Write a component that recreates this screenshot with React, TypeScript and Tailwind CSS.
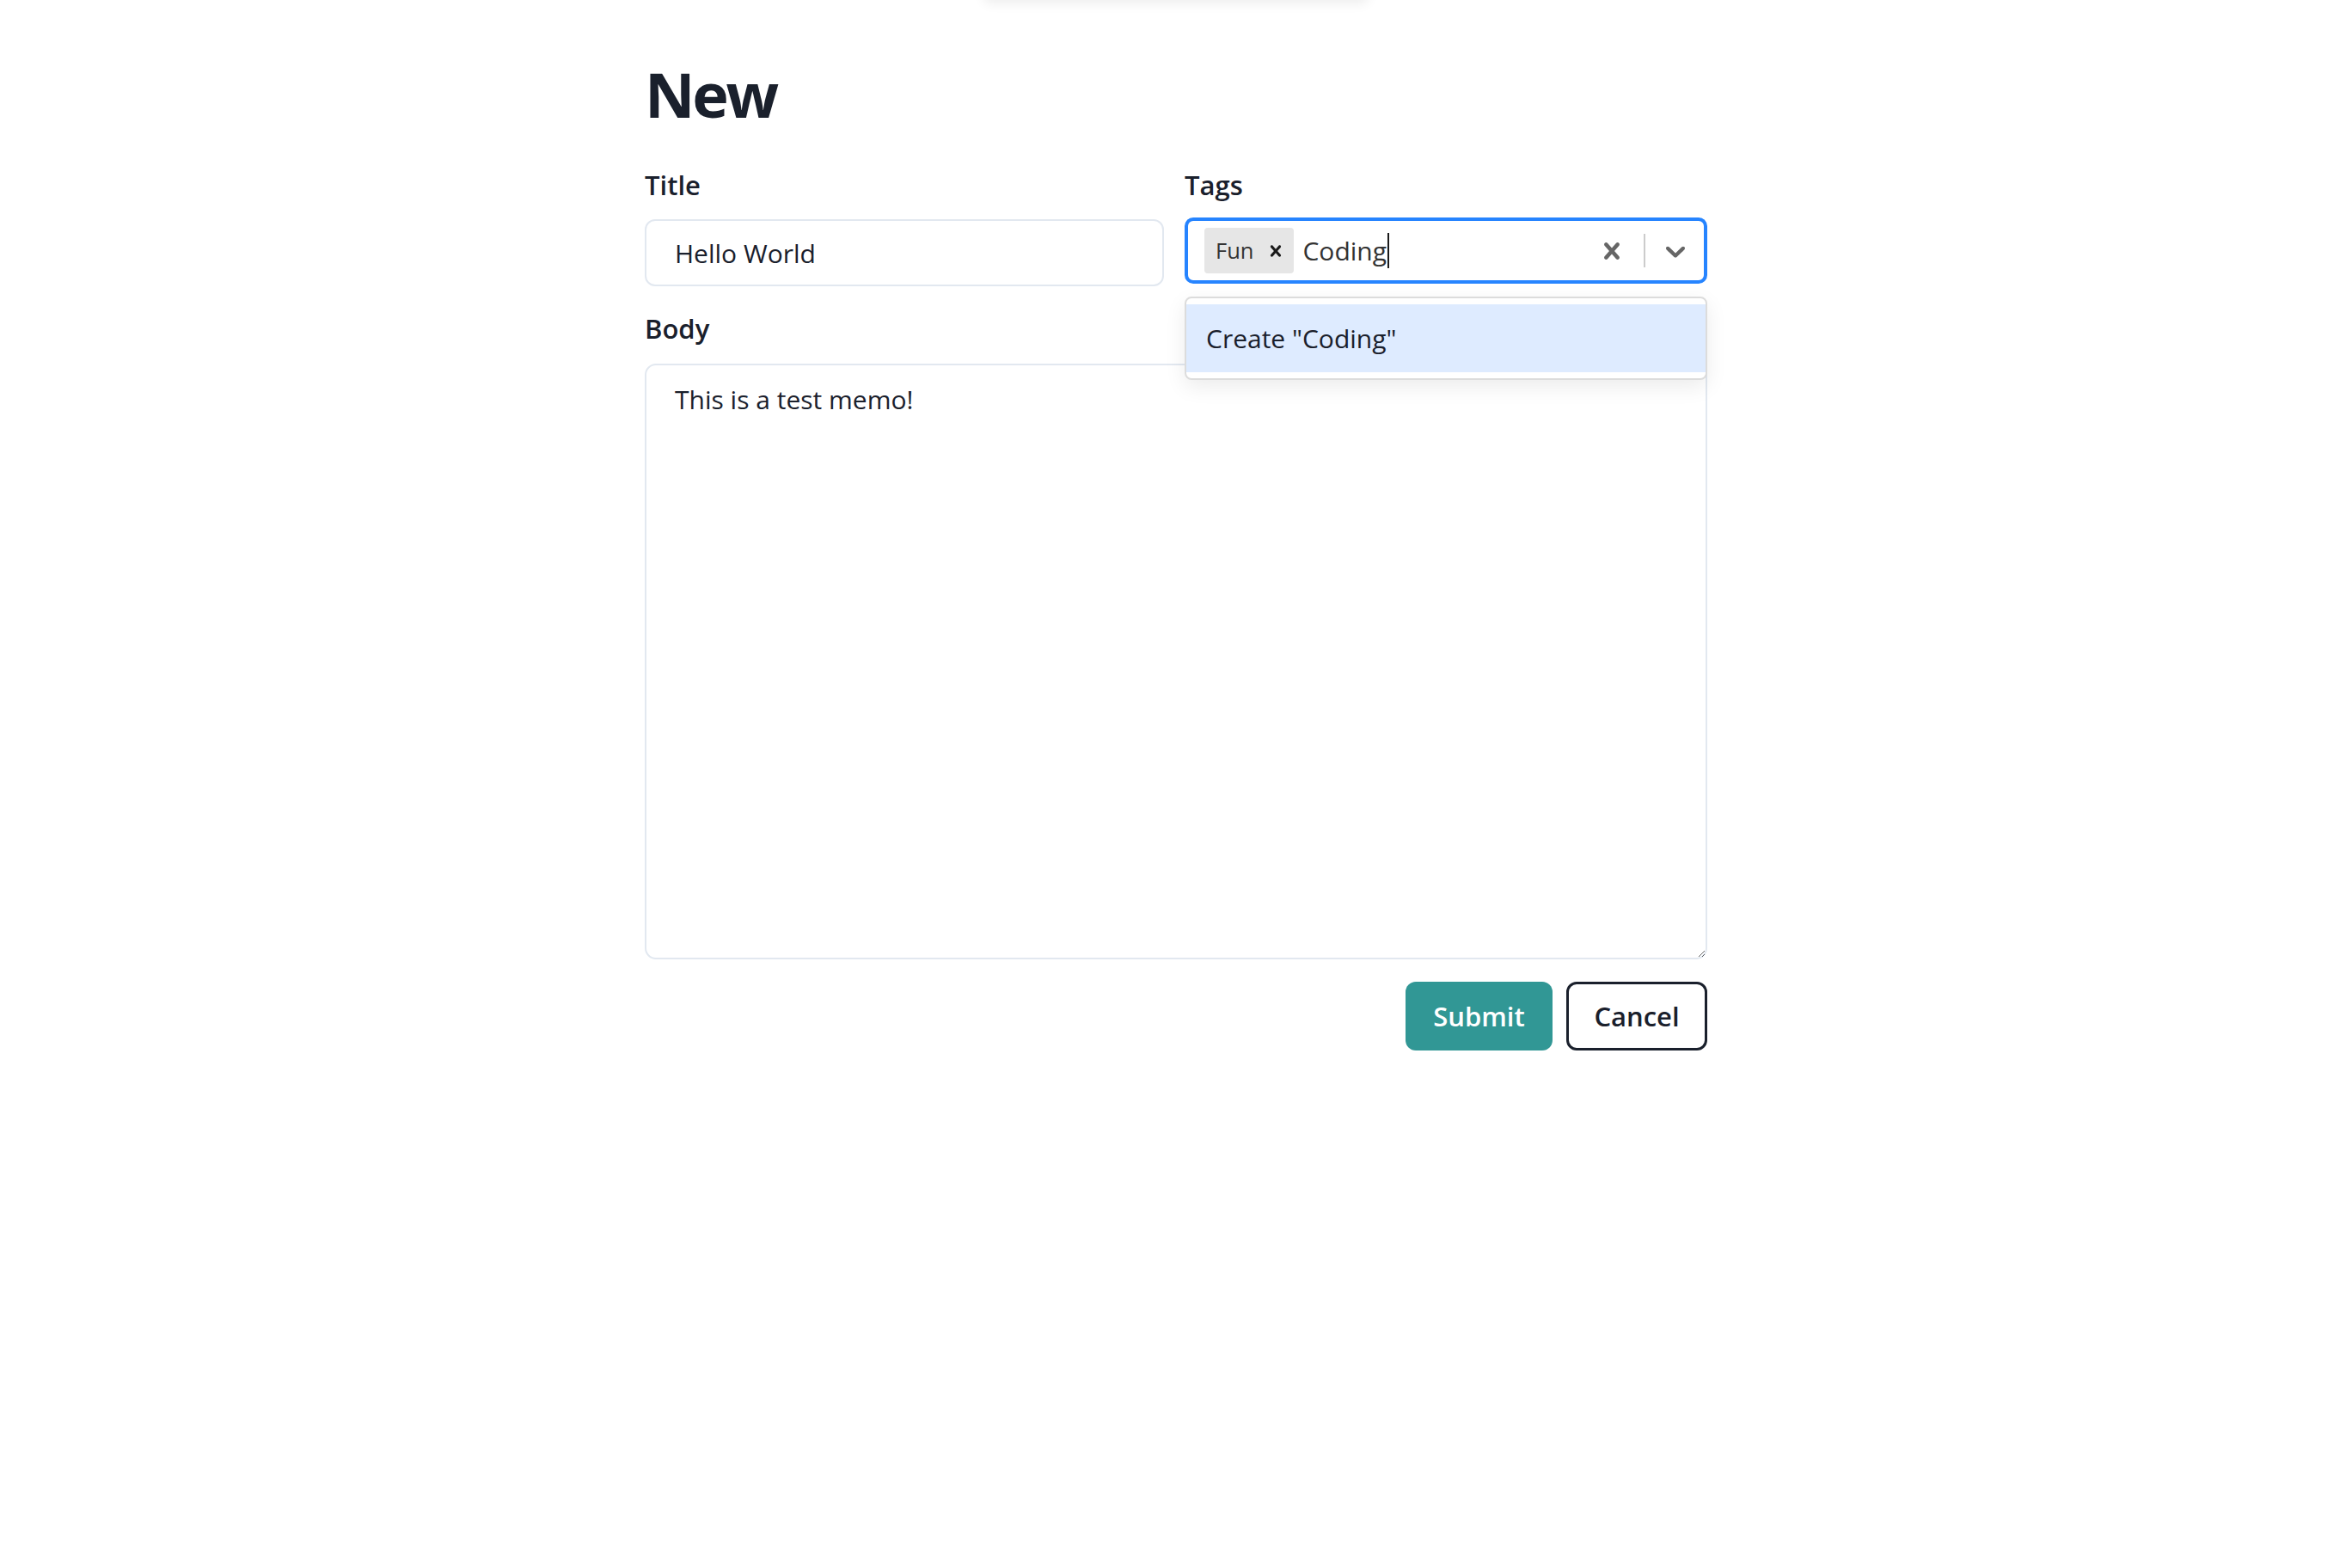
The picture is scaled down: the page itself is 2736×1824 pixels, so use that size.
import React from 'react';

function CrossIcon({ size }: { size: number }) {
  return (
    <svg width={size} height={size} viewBox="0 0 20 20" fill="currentColor" aria-hidden="true">
      <path d="M14.348 14.849c-0.469 0.469-1.229 0.469-1.697 0l-2.651-3.030-2.651 3.029c-0.469 0.469-1.229 0.469-1.697 0-0.469-0.469-0.469-1.229 0-1.697l2.758-3.15-2.759-3.152c-0.469-0.469-0.469-1.228 0-1.697s1.228-0.469 1.697 0l2.652 3.031 2.651-3.031c0.469-0.469 1.228-0.469 1.697 0s0.469 1.229 0 1.697l-2.758 3.152 2.758 3.15c0.469 0.469 0.469 1.229 0 1.698z" />
    </svg>
  );
}

function ChevronIcon({ size }: { size: number }) {
  return (
    <svg width={size} height={size} viewBox="0 0 20 20" fill="currentColor" aria-hidden="true">
      <path d="M4.516 7.548c0.436-0.446 1.043-0.481 1.576 0l3.908 3.747 3.908-3.747c0.533-0.481 1.141-0.446 1.574 0 0.436 0.445 0.408 1.197 0 1.615-0.406 0.418-4.695 4.502-4.695 4.502-0.217 0.223-0.502 0.335-0.787 0.335s-0.57-0.112-0.789-0.335c0 0-4.287-4.084-4.695-4.502s-0.436-1.17 0-1.615z" />
    </svg>
  );
}

export default function App() {
  return (
    <div className="relative min-h-screen bg-white font-['Open_Sans','Segoe_UI',sans-serif] text-[#1a202c] overflow-hidden">
      {/* toast sitting just above the viewport */}
      <div className="absolute top-0 left-1/2 -translate-x-1/2 -translate-y-full w-[448px] h-[60px] rounded-lg bg-white shadow-[0_4px_14px_rgba(0,0,0,0.07)]"></div>

      <div className="mx-auto w-[1236px] pt-[66px]">
        <h1 className="text-[72px] leading-[86px] font-bold tracking-[-0.045em]">New</h1>

        <div className="mt-[40px] grid grid-cols-[604px_1fr] gap-x-6">
          {/* Title */}
          <div>
            <label className="block text-[31px] leading-[46px] font-semibold">Title</label>
            <div className="mt-[17px] h-[78px] flex items-center rounded-[12px] border-2 border-[#e2e8f0] pl-[33px] text-[30px]">
              Hello World
            </div>
          </div>

          {/* Tags */}
          <div className="relative">
            <label className="block text-[31px] leading-[46px] font-semibold">Tags</label>
            <div className="mt-[15px] h-[77px] flex items-center rounded-[10px] border-4 border-[#2684ff] bg-white">
              <div className="flex-1 flex items-center pl-[19px]">
                <div className="h-[53px] flex items-center rounded-[4px] bg-[#e6e6e6]">
                  <span className="pl-[13px] pr-[6px] text-[25.5px] text-[#333333]">Fun</span>
                  <span className="pl-[7px] pr-[8px] text-[#1a1a1a]">
                    <CrossIcon size={26} />
                  </span>
                </div>
                <span className="ml-[10px] text-[30px] text-[#333333]">Coding</span>
                <span className="ml-[1px] w-[2px] h-[41px] bg-[#1a1a1a]"></span>
              </div>
              <div className="flex items-center self-stretch">
                <span className="pl-[15px] pr-[18px] text-[#666666]">
                  <CrossIcon size={38} />
                </span>
                <span className="w-[2px] h-[39px] bg-[#cccccc]"></span>
                <span className="pl-[16px] pr-[14px] text-[#666666]">
                  <ChevronIcon size={38} />
                </span>
              </div>
            </div>

            {/* menu */}
            <div className="absolute left-0 right-0 top-[153px] z-10 rounded-[8px] border-2 border-[#dcdcdc] bg-white py-[7px] shadow-[0_8px_24px_rgba(0,0,0,0.08)]">
              <div className="h-[79px] flex items-center bg-[#deebff] pl-[23px] text-[30px] text-[#1a202c]">
                Create "Coding"
              </div>
            </div>
          </div>
        </div>

        {/* Body */}
        <label className="mt-[26px] block text-[31px] leading-[46px] font-semibold">Body</label>
        <textarea
          className="mt-[18px] block w-full h-[693px] rounded-[13px] border-2 border-[#e2e8f0] pt-[17px] px-[33px] text-[30px] leading-[45px] text-[#1a202c] outline-none"
          defaultValue="This is a test memo!"
        />

        <div className="mt-[26px] flex justify-end gap-4">
          <button className="w-[171px] h-[80px] rounded-[12px] bg-[#319795] text-white text-[31px] font-semibold">
            Submit
          </button>
          <button className="w-[164px] h-[80px] rounded-[12px] border-[3px] border-[#1a202c] bg-white text-[#1a202c] text-[31px] font-semibold">
            Cancel
          </button>
        </div>
      </div>
    </div>
  );
}
